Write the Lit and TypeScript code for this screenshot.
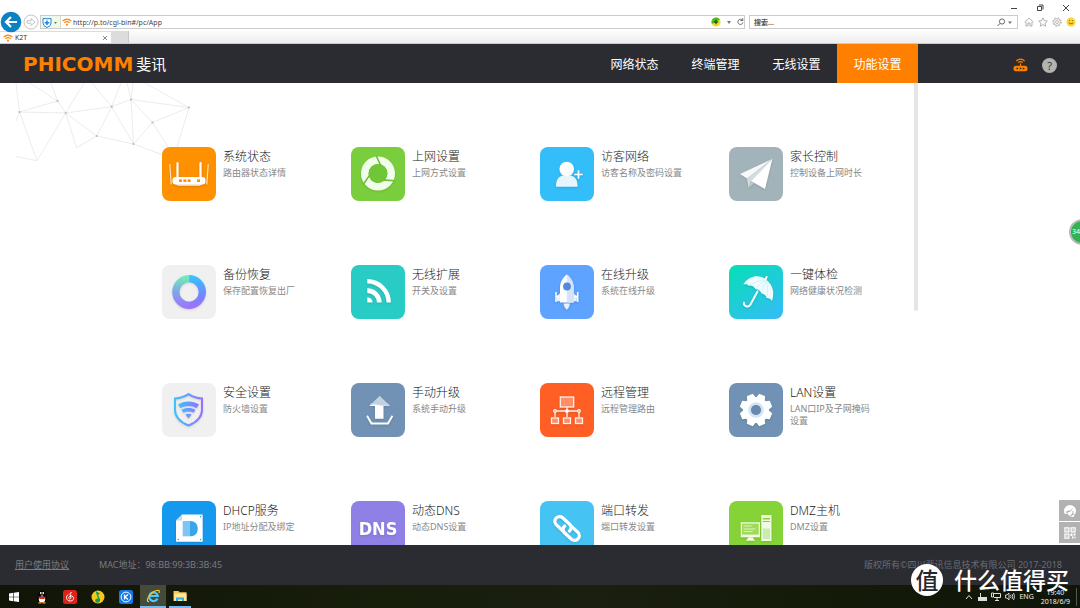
import { LitElement, html, svg, css } from "lit";
import { customElement, property } from "lit/decorators.js";

const glyphs: Record<string, unknown> = {
  router: svg`
    <g fill="none" stroke="#fff" stroke-linecap="round">
      <path stroke-width="1.2" stroke="#ffe3bf" d="M7.8 17.5 9.2 37M46.2 17.5 44.8 37"/>
      <path stroke-width="2.2" d="M15.5 16V31M38.5 16V31"/>
    </g>
    <path fill="#e9d3b5" d="M12 36h30l-4 3H16z"/>
    <rect x="10.5" y="30" width="33" height="7.6" rx="3" fill="#fff"/>
    <g fill="#ff9000"><rect x="17" y="32.4" width="3" height="2.6"/><rect x="21.4" y="32.4" width="3" height="2.6"/><rect x="25.6" y="32.4" width="3" height="2.6"/><rect x="35" y="32.4" width="3" height="2.6"/></g>`,
  swirl: svg`
    <circle cx="27" cy="26.500" r="13.2" fill="none" stroke="#f1fdea" stroke-width="7.6"/>
    <circle cx="27" cy="26.500" r="9.4" fill="#70c636"/>
    <g stroke="#6bbf33" stroke-width="1.6"><path d="M25.3 9 30 19"/><path d="M25.3 9 30 19" transform="rotate(120 27 26.500)"/><path d="M25.3 9 30 19" transform="rotate(240 27 26.500)"/></g>`,
  guest: svg`
    <path fill="#e6f6ff" d="M16 39.7c0-6 1.500-9.500 6.500-11.200h8.500c5 1.700 6.500 5.200 6.500 11.200z"/>
    <circle cx="26.700" cy="22" r="7.300" fill="#fff"/>
    <path d="M38.500 23.300v8.400M34.300 27.500h8.400" stroke="#fff" stroke-width="1.700"/>`,
  plane: svg`
    <path fill="#f7f9fa" d="M43.300 12 11 27l7 4.500z"/>
    <path fill="#d3dcdf" d="M43.300 12 18 31.500 19.500 41l2.500-7z"/>
    <path fill="#b9c6ca" d="M22 34 19.500 41l5.500-4.700z"/>
    <path fill="#fff" d="M43.300 12 22 34l14 8z"/>`,
  ring: svg`
    <defs>
      <linearGradient id="r1" x1="0" y1="0" x2="0" y2="1"><stop offset="0" stop-color="#31c9ff"/><stop offset=".55" stop-color="#7089ff"/><stop offset="1" stop-color="#a071ff"/></linearGradient>
      <linearGradient id="r2" x1="0" y1="0" x2="0" y2="1"><stop offset="0" stop-color="#6ff5b5"/><stop offset=".5" stop-color="#7fa5e6"/><stop offset="1" stop-color="#a071ff"/></linearGradient>
    </defs>
    <path fill="url(#r1)" d="M27 10a17 17 0 0 1 0 34v-7.300a9.700 9.700 0 0 0 0-19.400z"/>
    <path fill="url(#r2)" d="M27.200 10a17 17 0 0 0 0 34v-7.300a9.700 9.700 0 0 1 0-19.400z"/>`,
  feed: svg`
    <g fill="none" stroke="#fff"><path stroke-width="4.500" d="M16.300 16.200A21.400 21.400 0 0 1 37.700 37.600"/><path stroke-width="4.700" d="M16.300 25.600A12 12 0 0 1 28.300 37.600"/></g>
    <path fill="#fff" d="M16.300 32.300a5.300 5.300 0 0 1 5.300 5.300h-5.300z"/>`,
  rocket: svg`
    <path fill="#fff" d="M26.800 9.500C22.500 13 20 17.500 20 22.500v15h13.600v-15c0-5-2.500-9.500-6.800-13z"/>
    <path fill="#d5e4fb" d="M26.800 9.500v28h6.800v-15c0-5-2.500-9.500-6.800-13z"/>
    <circle cx="27" cy="21.500" r="3.900" fill="#5488d8"/>
    <path fill="#e9f1ff" d="M20 28.500 16.800 31v5.200H20zM33.600 28.500l3.200 2.500v5.200h-3.200zM23.500 38.500h6.500l-1 3.500-2.200 3-2.300-3z"/>
    <path d="M16 27v10M37.700 27v10M16 31.500h3M34.500 31.500h3" stroke="#fff" stroke-width="1.500"/>`,
  umbrella: svg`
    <path fill="#effcff" d="M14.300 19.500C20 10 31.500 9 37.800 15.200c6.700 5.300 7.700 13.200 5.200 20.800-1.500-2.200-3-3.300-5.200-3.100-1.200-2.800-2.800-4.100-5-4.400-1.500-2.800-3.500-4.300-6.200-4.500-2-2.700-4-3.800-6.800-3.300-1.800-1.500-3.300-1.800-5.500-1.200z"/>
    <path fill="none" stroke="#c4eff2" stroke-width=".7" d="M37 14.600C30 15 24 18 20 20.500M37 14.600C32 18 28.500 21 26.600 24M37 14.600C35 20 33.500 25 32.800 28.500M37 14.600C39 21 38.700 28 37.800 33"/>
    <path fill="none" stroke="#fff" stroke-width="2" stroke-linecap="round" d="M36.600 14.500l1-2.500M28.500 26.500 21.500 39.500c-2.300 3.600-7 2-6.500-1.800"/>`,
  shield: svg`
    <defs><linearGradient id="s1"><stop offset="0" stop-color="#3ac3ff"/><stop offset="1" stop-color="#9373ff"/></linearGradient></defs>
    <path fill="none" stroke="url(#s1)" stroke-width="2" d="M26.500 11.200c4.500 3 9 4.300 13.500 4.300v11.500c0 8-6 12.500-13.500 15.500C19 39.500 13 35 13 27V15.500c4.500 0 9-1.300 13.500-4.300z"/>
    <path fill="url(#s1)" d="M16 21.500c6-4 15-4 21 0l-2.500 3.800c-4.500-3-11.500-3-16 0zM19.500 27c4-2.600 10-2.600 14 0l-2 2.800c-3-1.800-7-1.800-10 0zM23.300 31.600c2-1 4.400-1 6.400 0L26.500 35.500z"/>`,
  upload: svg`
    <path fill="#fff" d="M18.300 23h5.700v12.700h8.500V23h6.500l-3-3H21z"/>
    <path fill="#c2d1df" d="M28.700 12.700 18.300 23c5-3 9-1 12-.5s6 0 8.700.5z"/>
    <path fill="none" stroke="#fff" stroke-width="1.900" d="M16 32.700 20.500 40.500h16.500l4.400-7.800"/>`,
  network: svg`
    <g fill="none" stroke="#fff3ee" stroke-width="1.300">
      <rect x="20.300" y="14" width="13.400" height="10" fill="#ff8e66"/>
      <path d="M27 24v10M15 34v-6h24v6"/>
      <rect x="11.500" y="35" width="7" height="5.500" fill="#ff8e66"/><rect x="23.500" y="35" width="7" height="5.500" fill="#ff8e66"/><rect x="35.500" y="35" width="7" height="5.500" fill="#ff8e66"/>
      <circle cx="15" cy="28" r="1.300" fill="#ff5f25"/><circle cx="27" cy="28" r="1.300" fill="#fff"/><circle cx="39" cy="28" r="1.300" fill="#ff5f25"/>
    </g>`,
  gear: svg`
    <circle cx="27" cy="27" r="13" fill="#fff"/>
    ${[22.5, 67.5, 112.5, 157.5, 202.5, 247.5, 292.5, 337.5].map(
      (a) => svg`<path fill="#fff" transform="rotate(${a} 27 27)" d="M22.300 16l1.500-5.200h6.400l1.500 5.200z"/>`
    )}
    <circle cx="27" cy="27" r="6.300" fill="#7192b4" stroke="#d3e4f4" stroke-width="3"/>
    <circle cx="27" cy="27" r="5" fill="#6689ad"/>`,
  dhcp: svg`
    <path fill="#fff" d="M20 13.500h20.700v27.200H14V19.500z"/><path fill="#b5ddf8" d="M20 13.500v6h-6z"/>
    <path fill="#7fc5f3" d="M20.700 20h7.300v15.300h-7.300z"/><path fill="#3ba5ec" d="M28 20c5 0 7.700 3 7.700 7.700S33 35.300 28 35.300z"/>
    <g fill="#1a97ea"><circle cx="38.500" cy="15.700" r=".7"/><circle cx="38.500" cy="38.500" r=".7"/><circle cx="16.200" cy="38.500" r=".7"/></g>`,
  dns: svg`<text x="27" y="34" text-anchor="middle" class="dns">DNS</text>`,
  link: svg`
    <g fill="none" stroke="#fff" stroke-width="3.300" stroke-linecap="round">
      <path d="M22.500 29.500 16.200 23.700c-4-4.500 1.800-10.700 6.500-7l7 6.500c2 2.200 1.800 5-.2 6.800"/>
      <path d="M31.500 25.500 38 31.300c4 4.500-1.800 10.700-6.500 7l-7-6.500c-2-2.200-1.800-5 .2-6.800"/>
    </g>`,
  host: svg`
    <path fill="#f1fbe2" d="M11.700 21.300H31v15H11.700z"/><path fill="#9edb58" d="M13 22.600h16.700v11H13z"/>
    <path stroke="#dff5bd" stroke-width="1" d="M14.500 25h8M14.500 28h12M14.500 30.500h9"/>
    <path fill="#f1fbe2" d="M19.500 36.300h4l2.500 3.500h-9zM32.300 14h10.200v26H32.300z"/>
    <path fill="#86d337" d="M33.800 17h7.200v1.500h-7.200zM33.800 20h7.200v1h-7.200z"/><path fill="#c9ecb0" d="M33.800 27.500h7.200V38h-7.200z"/>`,
};

interface Feature { icon: string; color: string; title: string; note: string; }

const features: Feature[] = [
  { icon: "router", color: "#ff9000", title: "系统状态", note: "路由器状态详情" },
  { icon: "swirl", color: "#7ace3d", title: "上网设置", note: "上网方式设置" },
  { icon: "guest", color: "#33bdf9", title: "访客网络", note: "访客名称及密码设置" },
  { icon: "plane", color: "#a3b3ba", title: "家长控制", note: "控制设备上网时长" },
  { icon: "ring", color: "#f0f0f0", title: "备份恢复", note: "保存配置恢复出厂" },
  { icon: "feed", color: "#29cbc5", title: "无线扩展", note: "开关及设置" },
  { icon: "rocket", color: "#5da3ff", title: "在线升级", note: "系统在线升级" },
  { icon: "umbrella", color: "linear-gradient(145deg,#05e0b5,#37baf8)", title: "一键体检", note: "网络健康状况检测" },
  { icon: "shield", color: "#f0f0f0", title: "安全设置", note: "防火墙设置" },
  { icon: "upload", color: "#7192b4", title: "手动升级", note: "系统手动升级" },
  { icon: "network", color: "#ff5f25", title: "远程管理", note: "远程管理路由" },
  { icon: "gear", color: "#7192b4", title: "LAN设置", note: "LAN口IP及子网掩码设置" },
  { icon: "dhcp", color: "#1599ee", title: "DHCP服务", note: "IP地址分配及绑定" },
  { icon: "dns", color: "#8f80e5", title: "动态DNS", note: "动态DNS设置" },
  { icon: "link", color: "#45c3f2", title: "端口转发", note: "端口转发设置" },
  { icon: "host", color: "#86d337", title: "DMZ主机", note: "DMZ设置" },
];

const reset = css`
  * { box-sizing: border-box; }
  button, input { font: inherit; color: inherit; border: 0; padding: 0; margin: 0; background: none; outline: 0; }
  button { display: flex; align-items: center; justify-content: center; }
  a { color: inherit; text-decoration: none; }
  svg { display: block; flex: none; }
`;

@customElement("feature-tile")
class FeatureTile extends LitElement {
  @property({ attribute: false }) item!: Feature;
  static styles = [reset, css`
    :host { display: block; }
    .tile { display: flex; gap: 7px; padding-right: 42px; height: 54px; }
    .icon { flex: none; width: 54px; height: 54px; border-radius: 8px; overflow: hidden; }
    .glyph { filter: drop-shadow(0 1px 1px rgba(0, 0, 0, 0.12)); }
    .words { display: flex; flex-direction: column; min-width: 0; }
    .title { font-size: 12px; line-height: 20px; color: #222; white-space: nowrap; font-weight: 300; }
    .note { font-size: 9px; line-height: 12px; color: #888; }
    .dns { font: bold 18px "DejaVu Sans Condensed", "DejaVu Sans", sans-serif; fill: #fff; }
  `];
  render() {
    const { icon, color, title, note } = this.item;
    return html`<a class="tile" href="#${icon}">
      <span class="icon" style="background:${color}"><svg class="glyph" width="54" height="54" viewBox="0 0 54 54">${glyphs[icon]}</svg></span>
      <span class="words"><span class="title">${title}</span><span class="note">${note}</span></span>
    </a>`;
  }
}

const wifi = html`<svg width="10" height="8" viewBox="0 0 10 8"><g fill="none" stroke="#ff8c1a" stroke-width="1.300"><path d="M.6 3.100c2.500-2.500 6.300-2.500 8.800 0M2.300 4.900c1.600-1.500 3.800-1.500 5.400 0"/></g><circle cx="5" cy="6.700" r="1.100" fill="#ff8c1a"/></svg>`;

@customElement("app-root")
class AppRoot extends LitElement {
  static styles = [reset, css`
    :host { display: block; font-family: "Noto Sans", "Noto Sans CJK SC", sans-serif; background: #fff; }
    .screen { position: relative; display: flex; flex-direction: column; height: 100vh; overflow: hidden; }

    .titlebar { display: flex; justify-content: flex-end; gap: 18px; height: 15px; padding: 4px 10px 0 0; }
    .titlebar button { width: 8px; height: 8px; }
    .address { display: flex; align-items: center; height: 14px; padding-right: 4px; position: relative; z-index: 1; }
    .back { width: 22px; height: 22px; }
    .forward { width: 16px; height: 16px; margin: 0 1px; }
    .box { display: flex; align-items: center; height: 14px; border: 1px solid #ccc; font-size: 7px; }
    .url { flex: 1; gap: 1px; }
    .safe { width: 20px; height: 12px; background: #f0f8e6; border-right: 1px solid #d6dfca; }
    .url input { flex: 1; min-width: 0; height: 12px; color: #444; }
    .tools { display: flex; align-items: center; gap: 6px; }
    .search { width: 269px; margin: 0 6px 0 4px; padding: 0 5px 0 4px; }
    .search input { flex: 1; min-width: 0; height: 12px; font-weight: bold; color: #555; }
    .search input::placeholder { color: #555; opacity: 1; }
    .extras { display: flex; gap: 4px; }
    .tabs { display: flex; height: 15px; padding-top: 2px; background: linear-gradient(#fff, #ededed); border-bottom: 1px solid #ccc; font-size: 7px; }
    .tab { display: flex; align-items: center; gap: 2px; width: 112px; padding: 0 3px; background: #fff; border: 1px solid #ddd; border-width: 1px 1px 0 0; color: #333; }
    .tab .name { flex: 1; }
    .newtab { width: 17px; background: #dcdcdc; border: 1px solid #c8c8c8; border-width: 0 1px 0 0; }

    .header { display: flex; align-items: center; height: 39px; flex: none; background: #2b2c32; color: #fff; }
    .brand { display: flex; align-items: center; gap: 3px; flex: 1; padding-left: 23px; }
    .brand .latin { font: bold 20px/24px "DejaVu Sans", sans-serif; color: #ff7f00; }
    .brand .han { font-size: 15px; line-height: 24px; }
    .nav { display: flex; align-self: stretch; font-size: 12px; }
    .nav a { display: flex; align-items: center; justify-content: center; width: 81px; }
    .nav .active { background: #ff8000; }
    .side { display: flex; flex: none; align-items: center; justify-content: flex-end; gap: 14px; width: 15%; padding: 3px 23px 0 0; }
    .help { width: 15px; height: 15px; border-radius: 50%; background: #b3b3b3; color: #2b2c32; font: 11px/15px "Open Sans", sans-serif; }

    .main { position: relative; flex: 1; min-height: 0; overflow: hidden; }
    .mesh { position: absolute; left: 0; top: 0; }
    .content { position: relative; width: 70%; height: 100%; margin: 0 auto; padding-top: 64px; }
    .grid { display: grid; grid-template-columns: repeat(4, 1fr); row-gap: 64px; }
    .thumb { position: absolute; right: 0; top: 0; width: 4px; height: 228px; background: #e5e5e5; border-radius: 0 0 2px 2px; }
    .float { position: absolute; right: 0; bottom: 2px; display: flex; flex-direction: column; gap: 1px; }
    .float button { width: 21px; height: 21px; background: #b2b2b2; }
    .ball { position: absolute; right: -15px; top: 136px; width: 26px; height: 26px; border-radius: 50%; background: #32b156; border: 2px solid #b9bdb9; color: #fff; font-size: 7px; line-height: 22px; padding-left: 1px; }

    .footer { display: flex; align-items: center; flex: none; gap: 30px; height: 40px; padding: 0 18px 1px 15px; background: #2b2c32; color: #797b80; font-size: 9px; }
    .footer a { text-decoration: underline; }
    .footer .rights { margin-left: auto; color: #696b70; }

    .taskbar { display: flex; flex: none; height: 23px; background: linear-gradient(90deg, #111508, #171e0a 35%, #1a1f10 55%, #141b08 75%, #10150a); color: #eee; }
    .taskbar button { width: 28px; }
    .taskbar .open { border-bottom: 2px solid #76b9ed; width: 26px; background: #454a39; }
    .taskbar .idle { border-bottom: 2px solid #76b9ed; width: 22px; margin-left: 3px; }
    .tray { display: flex; align-items: center; gap: 4px; margin-left: auto; padding-right: 3px; font-size: 7px; }
    .clock { margin-left: 3px; padding-right: 6px; line-height: 9px; text-align: center; border-right: 1px solid #555; }
    .mark { position: absolute; right: 11px; bottom: 12px; display: flex; align-items: center; gap: 11px; color: #fff; font-size: 23px; line-height: 32px; font-weight: 500; }
    .seal { width: 32px; height: 32px; border-radius: 50%; background: #fff; color: #26272b; text-align: center; }
  `];

  render() {
    return html`<div class="screen">
      <div class="titlebar">
        <button aria-label="最小化"><svg width="8" height="8"><path d="M1 4.500h6" stroke="#444"/></svg></button>
        <button aria-label="还原"><svg width="8" height="8" fill="none" stroke="#444"><path d="M1.500 2.500h4v4h-4zM3 1h4v4.500"/></svg></button>
        <button aria-label="关闭"><svg width="8" height="8"><path d="M1 1l6 6M7 1 1 7" stroke="#444"/></svg></button>
      </div>
      <div class="address">
        <button class="back" aria-label="后退"><svg width="22" height="22" viewBox="0 0 22 22"><circle cx="11" cy="11" r="10.300" fill="#0a82c4"/><path d="M17 11H6.500M11 6l-5 5 5 5" fill="none" stroke="#fff" stroke-width="2.200"/></svg></button>
        <button class="forward" aria-label="前进"><svg width="16" height="16" viewBox="0 0 16 16" fill="none" stroke="#c4c4c4"><circle cx="8" cy="8" r="7"/><path d="M4 6.800h4V4.500L12 8l-4 3.500V9.200H4z"/></svg></button>
        <div class="box url">
          <button class="safe" aria-label="安全"><svg width="17" height="11" viewBox="0 0 17 11"><path d="M1 1.500q4 .5 8 0V6q0 3-4 4.500Q1 9 1 6z" fill="#fff" stroke="#2483d8"/><path d="M5 3.500v4.600M2.700 5.800h4.600" stroke="#2483d8" stroke-width="1.500"/><path d="M12 5h3l-1.500 2z" fill="#777"/></svg></button>
          ${wifi}
          <input aria-label="地址" value="http://p.to/cgi-bin#/pc/App">
          <div class="tools">
            <svg width="10" height="10" viewBox="0 0 10 10"><circle cx="5" cy="5" r="4.600" fill="#f6dc1f"/><path d="M5 .4A4.600 4.600 0 0 0 1 7l8-4.500A4.600 4.600 0 0 0 5 .4z" fill="#55b52b"/><path d="M5 2.800v4.400M2.800 5h4.400" stroke="#17651c" stroke-width="1.400"/></svg>
            <svg width="4" height="3"><path d="M0 0h4L2 3z" fill="#777"/></svg>
            <svg width="7" height="8" viewBox="0 0 7 8" fill="none" stroke="#666"><path d="M5.500 2.200A2.600 2.600 0 1 0 6 4.500M3.500 2.500h2.300V.3"/></svg>
          </div>
        </div>
        <div class="box search">
          <input aria-label="搜索" placeholder="搜索...">
          <svg width="15" height="9" viewBox="0 0 15 9" fill="none" stroke="#666"><circle cx="5" cy="3.500" r="2.600"/><path d="M3.200 5.300.5 8"/><path d="M11 3.500h4l-2 2.500z" fill="#777" stroke="none"/></svg>
        </div>
        <div class="extras">
          <button aria-label="主页"><svg width="10" height="10" viewBox="0 0 10 10" fill="none" stroke="#aaa" stroke-width=".9"><path d="M.7 5 5 1l4.300 4M2 4.500V9h2V6h2v3h2V4.500"/></svg></button>
          <button aria-label="收藏"><svg width="10" height="10" viewBox="0 0 10 10" fill="none" stroke="#aaa" stroke-width=".9"><path d="M5 .8l1.300 2.900 3.100.3-2.300 2.100.6 3.100L5 7.600 2.300 9.200l.6-3.100L.6 4l3.100-.3z"/></svg></button>
          <button aria-label="设置"><svg width="10" height="10" viewBox="0 0 10 10" fill="none" stroke="#aaa" stroke-width=".8"><circle cx="5" cy="5" r="1.500"/><circle cx="5" cy="5" r="3.400"/><circle cx="5" cy="5" r="4.300" stroke-dasharray="1.700 1.700"/></svg></button>
          <button aria-label="反馈"><svg width="10" height="10" viewBox="0 0 10 10"><circle cx="5" cy="5" r="4.500" fill="#fcd430"/><path d="M3 3.500h1M6 3.500h1M2.700 5.800q2.300 2.200 4.600 0" fill="none" stroke="#8a6a10" stroke-width=".9"/></svg></button>
        </div>
      </div>
      <div class="tabs">
        <div class="tab">${wifi}<span class="name">K2T</span><button aria-label="关闭标签页"><svg width="6" height="6"><path d="M1 1l4 4M5 1 1 5" stroke="#888"/></svg></button></div>
        <button class="newtab" aria-label="新标签页"></button>
      </div>

      <header class="header">
        <div class="brand"><span class="latin">PHICOMM</span><span class="han">斐讯</span></div>
        <nav class="nav"><a href="#status">网络状态</a><a href="#devices">终端管理</a><a href="#wireless">无线设置</a><a class="active" href="#app">功能设置</a></nav>
        <div class="side">
          <button aria-label="路由器"><svg width="15" height="14" viewBox="0 0 15 14"><g fill="none" stroke="#ff8000" stroke-width="1.100"><path d="M3.300 3.200c2.300-2.800 6.100-2.800 8.400 0M5.200 4.700c1.400-1.500 3.200-1.500 4.600 0M7.500 5.500V9"/></g><rect x=".5" y="7.800" width="14" height="5.400" rx="2.500" fill="#ff8000"/><path d="M3.500 10.500h1.500M6.700 10.500h1.500M9.800 10.500h1.500" stroke="#2b2c32" stroke-width="1.300"/></svg></button>
          <button class="help" aria-label="帮助">?</button>
        </div>
      </header>

      <main class="main">
        <svg class="mesh" width="200" height="90" fill="none" stroke="#ececec">
          <path d="M16 0 19.500 29 57.500 18 65.700 30 111.700 23.700 131 16.500 189 24.500 152.500 39.500 133.500 61 96.700 53 65.700 30 19.500 29 37 77.700 65.700 30 76.500 64.700 96.700 53 111.700 23.700 133.500 61 131 16.500 152.500 39.500 168 64M30 0 57.500 18 51 0M65.700 30 84 0M92 0l19.700 23.700L121 0M127 0l4 16.500L133 0M145 0l44 24.500-12 40M133.500 61l32 12M19.500 29 16 38M37 77.700 16 73.500"/>
          <g fill="#bbb" stroke="none">${[[19.5, 29], [57.5, 18], [65.7, 30], [111.7, 23.7], [131, 16.5], [189, 24.5], [152.5, 39.5], [133.5, 61], [96.7, 53]].map(([x, y]) => svg`<circle cx=${x} cy=${y} r="1.100"/>`)}</g>
        </svg>
        <div class="content">
          <div class="grid">${features.map((f) => html`<feature-tile .item=${f}></feature-tile>`)}</div>
          <div class="thumb"></div>
        </div>
        <div class="ball">34</div>
        <div class="float">
          <button aria-label="客服"><svg width="14" height="14" viewBox="0 0 14 14"><path d="M2 7a5 5 0 0 1 10 0" fill="#fff" stroke="#fff" stroke-width="2"/><path d="M1 6h2.500v4H2Q1 9 1 6zM10.500 6H13q0 3-1 4h-1.500zM7 12.700l5-3-1.500 3.300z" fill="#fff"/><path d="M4.200 9 9.500 6v3L7 12q-2-.5-2.800-3z" fill="#fff"/><path d="M4 7.500Q8 7.500 9.500 5" stroke="#b2b2b2" fill="none"/></svg></button>
          <button aria-label="二维码"><svg width="12" height="12" viewBox="0 0 12 12"><g fill="none" stroke="#fff" stroke-width="1.200"><path d="M.9.900h4v4h-4zM7.100.900h4v4h-4zM.9 7.100h4v4h-4z"/></g><path fill="#fff" d="M2.300 2.300h1.200v1.200H2.300zM8.500 2.300h1.200v1.200H8.500zM2.300 8.500h1.200v1.200H2.300zM6.500 6.500h2V9h-2zM9.500 6.500h2v2h-2zM8 9.500h1.500v2H8zM10.500 9.500h1v2h-1z"/></svg></button>
        </div>
      </main>

      <footer class="footer">
        <a href="#terms">用户使用协议</a><span>MAC地址：98:BB:99:3B:3B:45</span>
        <span class="rights">版权所有©四川斐讯信息技术有限公司 2017-2018</span>
      </footer>

      <div class="taskbar">
        <button aria-label="开始"><svg width="10" height="10" viewBox="0 0 10 10" fill="#fff"><path d="M0 1.400l4.300-.6v3.900H0zM4.900.700 10 0v4.700H4.900zM0 5.300h4.300v3.900L0 8.600zM4.900 5.300H10V10l-5.100-.7z"/></svg></button>
        <button aria-label="QQ"><svg width="12" height="14" viewBox="0 0 12 14"><ellipse cx="6" cy="8" rx="4.800" ry="4.800" fill="#000"/><ellipse cx="6" cy="4" rx="3.300" ry="3.500" fill="#000"/><ellipse cx="6" cy="9.500" rx="3.200" ry="3" fill="#fff"/><path d="M2.500 6.200Q6 8 9.500 6.200V8.200Q6 10 2.500 8.200z" fill="#e8232a"/><circle cx="4.800" cy="3" r=".9" fill="#fff"/><circle cx="7.200" cy="3" r=".9" fill="#fff"/><path d="M4 4.800h4L6 6zM2.500 12.200h3v1.300h-3zM6.500 12.200h3v1.300h-3z" fill="#f7a51c"/></svg></button>
        <button aria-label="网易云音乐"><svg width="14" height="14" viewBox="0 0 14 14"><rect width="14" height="14" rx="2.500" fill="#df2117"/><path d="M8.800 2.800c-1.300-.5-1.900.2-1.600 1.400L7.900 7.500c.2 1.900-2.300 1.900-2.200.2.200-2 3-2.400 4.300-1 1.700 2.300-.3 4.300-2.800 4.300C3.200 11 2.300 6.300 5.300 4.400" fill="none" stroke="#fff"/></svg></button>
        <button aria-label="QQ音乐"><svg width="14" height="14" viewBox="0 0 14 14"><circle cx="7" cy="7" r="6.500" fill="#f8c91c"/><path d="M4.500 1 9 3.500 7 5l2.200 4.500c0 4-5 4-5 1.200 0-1.700 1.500-2.500 2.800-2.200z" fill="#139a57"/></svg></button>
        <button aria-label="酷狗音乐"><svg width="14" height="14" viewBox="0 0 14 14"><rect width="14" height="14" rx="2.500" fill="#1479ea"/><circle cx="7" cy="7" r="4.900" fill="none" stroke="#fff"/><path d="M5.500 4.500v5M9 4.500 6 7l3 2.500" fill="none" stroke="#fff" stroke-width="1.300"/></svg></button>
        <button class="open" aria-label="Internet Explorer"><svg width="15" height="14" viewBox="0 0 15 14" fill="none"><path d="M11.500 9.500A4.300 4.300 0 1 1 11.800 7H4" stroke="#53c8f5" stroke-width="2.200"/><path d="M3 12.500C-.5 13.500 2 6 7.500 2.800 11 .7 14.500.5 13 4" stroke="#f4c62f" stroke-width="1.200"/></svg></button>
        <button class="idle" aria-label="文件资源管理器"><svg width="14" height="12" viewBox="0 0 14 12"><path d="M.5 1h5l1 1.300h7V11H.5z" fill="#f0c654"/><path d="M1.300 3.500h12.200V11H1.300z" fill="#ffe594"/><path d="M3 11V7.500h8V11H9V9.500H5V11z" fill="#35aee6"/></svg></button>
        <div class="tray">
          <svg width="8" height="6" fill="none" stroke="#ddd"><path d="M1 5l3-3.500L7 5"/></svg>
          <svg width="10" height="8"><path d="M1 4h9v4H1zM3 0h1v4H3z" fill="#ddd"/></svg>
          <svg width="10" height="9" fill="none" stroke="#ddd"><path d="M3 1.500h6.500v4H3M6 6v2.500M4 8.500h4M.5 1v4h2V1z"/></svg>
          <svg width="10" height="9" fill="none" stroke="#ddd" stroke-width=".9"><path d="M.5 3h1.500l2-2v7L2 6H.5zM5.500 3q1 1.500 0 3M7 2q1.700 2.500 0 5M8.500 1q2.300 3.500 0 7"/></svg>
          <span>ENG</span>
          <div class="clock">19:40<br>2018/6/9</div>
        </div>
      </div>
      <div class="mark"><span class="seal">值</span><span>什么值得买</span></div>
    </div>`;
  }
}
